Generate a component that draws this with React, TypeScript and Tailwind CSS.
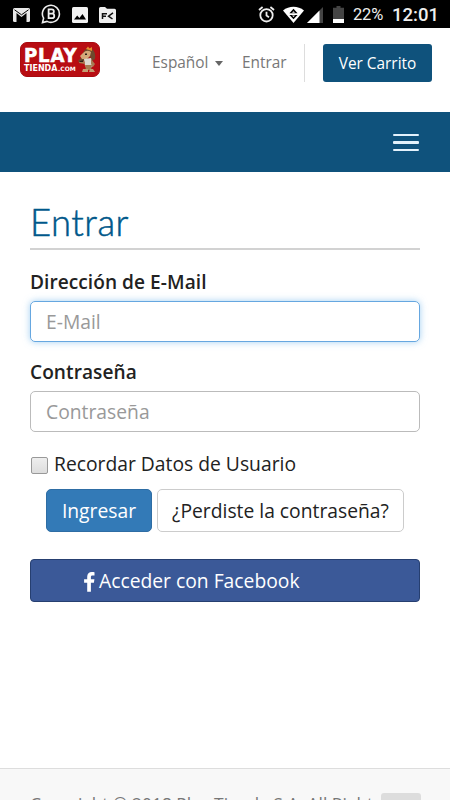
/**
 * Login page (mobile)
 * Android status bar, store header, login form and footer
 */

function StatusBar() {
  return (
    <div className="h-7 shrink-0 bg-black flex items-center justify-between pl-[13px] pr-[11px] pt-px">
      <div className="flex items-center gap-[11px]">
        {/* Mail */}
        <svg className="w-[17px] h-[14px]" viewBox="0 0 17 14">
          <rect width="17" height="14" rx="1.5" fill="#e8e8e8" />
          <path d="M3.5 14V5L8.5 9L13.5 5V14Z" fill="#000" />
          <path d="M1.5 1.8L8.5 6.8L15.5 1.8" fill="none" stroke="#000" strokeWidth="1" />
        </svg>
        {/* Business chat */}
        <svg className="w-5 h-5 -mt-px" viewBox="0 0 20 20">
          <path d="M1.5 18.6L2.6 14.2A8.5 8.5 0 1 1 6 17.4Z" fill="none" stroke="#eee" strokeWidth="1.6" />
          <path d="M7.6 5.4H10.7A2 2 0 0 1 10.7 9.7H7.6ZM7.6 9.7H11A2.2 2.2 0 0 1 11 14.2H7.6Z" fill="none" stroke="#eee" strokeWidth="1.8" />
        </svg>
        {/* Gallery */}
        <svg className="w-4 h-4" viewBox="0 0 16 16">
          <rect width="16" height="16" rx="1.5" fill="#f2f2f2" />
          <path d="M2 12.5L5.2 8.5L7.4 11L10.5 7L14 12.5Z" fill="#000" />
        </svg>
        {/* File explorer */}
        <svg className="w-[17px] h-4" viewBox="0 0 17 16">
          <path d="M1.5 0H6L8 1.8H15.5A1.5 1.5 0 0 1 17 3.3V14.5A1.5 1.5 0 0 1 15.5 16H1.5A1.5 1.5 0 0 1 0 14.5V1.5A1.5 1.5 0 0 1 1.5 0Z" fill="#eee" />
          <path d="M3.5 12V6.7H8M3.5 9.3H7M14 5.8L9.5 9.2L13.5 12" fill="none" stroke="#111" strokeWidth="1.5" />
        </svg>
      </div>

      <div className="flex items-center text-[#eee] font-['Roboto',sans-serif]">
        {/* Alarm */}
        <svg className="w-[17px] h-[17px]" viewBox="0 0 17 17" fill="none" stroke="#eee" strokeWidth="1.8">
          <circle cx="8.5" cy="9.3" r="6.2" />
          <path d="M8.5 5.8V9.6L11 11.2M1 4L4.6 1M16 4L12.4 1" />
        </svg>
        {/* Wifi */}
        <svg className="w-[21px] h-[17px] ml-[8px]" viewBox="0 0 21 17">
          <path d="M0 4.5C6 -0.5 15 -0.5 21 4.5L10.5 17Z" fill="#fff" />
          <path d="M10.5 2.8L14.6 7.3H6.4ZM6.4 9H14.6L10.5 13.3Z" fill="#000" />
          <path d="M10.5 5.2L12 6.7H9ZM9 9.5H12L10.5 11Z" fill="#fff" />
        </svg>
        {/* Signal */}
        <svg className="w-4 h-4 ml-[3px]" viewBox="0 0 16 16">
          <path d="M16 0V16H0Z" fill="#444" />
          <path d="M12.5 3.5V16H0Z" fill="#fff" />
        </svg>
        {/* Battery */}
        <svg className="w-[11px] h-[17px] ml-[10px]" viewBox="0 0 11 17">
          <path d="M3.5 0H7.5V1.7H11V17H0V1.7H3.5Z" fill="#444" />
          <rect y="13" width="11" height="4" fill="#fff" />
        </svg>
        <span className="ml-[9px] w-[31px] text-[16.5px] tracking-[-0.2px] leading-7 whitespace-nowrap">22%</span>
        <span className="ml-[8px] w-[47px] text-[18.5px] font-medium leading-7 whitespace-nowrap">12:01</span>
      </div>
    </div>
  );
}

function Logo() {
  return (
    <div className="relative w-20 h-[35px] rounded-[7px] border border-[#a80a10] bg-[#b80d12] text-white font-['DejaVu_Sans',sans-serif] font-bold">
      <span className="absolute left-[3px] top-[4px] h-[17px] leading-[17px] text-[19px] origin-left scale-x-[0.95] tracking-[0.9px] [-webkit-text-stroke:0.6px_#fff]">PLAY</span>
      <span className="absolute left-[3px] top-[21px] h-[9px] leading-[9px] text-[8px]">TIENDA</span>
      <span className="absolute left-[37px] top-[22px] h-[8px] leading-[8px] text-[6px]">.COM</span>
      {/* Dog mascot */}
      <svg className="absolute left-[56px] top-[3px] w-[20px] h-[27px]" viewBox="56 4 20 27">
        <path d="M63 9Q66 5 71 7Q75 10 74 17L71 19L69 14L66 18L59 21L57 19L61 15Z" fill="#6d4a2d" />
        <path d="M62 11Q66 7 70 10L69 14L66 17L61 17L59 14Z" fill="#d3a878" />
        <path d="M65 7L67 4.5L68.5 6.5L71 5L71 9Z" fill="#e58c2e" />
        <path d="M63 17L70 16L72 24L68 27L64 24Z" fill="#dcd8d0" />
        <path d="M59 18L64 20L64 22L58 21ZM70 17L74 22L72 25L70 22ZM64 23H71L70 28H65Z" fill="#a77c52" />
        <path d="M62 27H67V30H61ZM69 27H72L74 30H68Z" fill="#c39d72" />
        <path d="M58.5 18.5H62V20H58.5ZM64 11.5H66V13H64Z" fill="#2c2019" />
      </svg>
    </div>
  );
}

function Header() {
  return (
    <header className="h-[84px] shrink-0 flex items-start pl-[20px] pr-[18px] pt-[14px] text-[15.4px] text-[#777]">
      <Logo />
      <div className="ml-[52px] h-[41px] flex items-center">
        <span className="w-[59px] whitespace-nowrap">Español</span>
        <span className="ml-[4px] mt-[2px] border-x-[4.5px] border-x-transparent border-t-[5px] border-t-[#666]"></span>
      </div>
      <span className="ml-[19px] w-[45px] leading-[41px] whitespace-nowrap">Entrar</span>
      <div className="ml-[17px] mt-[2px] w-px h-[38px] bg-[#ddd]"></div>
      <button className="ml-auto mt-[2px] w-[109px] h-[38px] rounded-[3px] bg-[#0f527c] text-white leading-[39px] whitespace-nowrap">
        Ver Carrito
      </button>
    </header>
  );
}

function LoginForm() {
  return (
    <main className="grow px-[30px] pt-[27px] text-[19.3px] text-[#222]">
      <h1 className="h-[51px] border-b-2 border-[#d2d2d2] font-['Lato',sans-serif] font-light text-[36.5px] leading-[47px] text-[#00588a] [-webkit-text-stroke:0.5px_#00588a]">
        <span className="tracking-[0.5px]">Entrar</span>
      </h1>

      <label className="block mt-[18px] h-[33px] leading-[29px] font-semibold text-[19.1px] tracking-[0.05px]">Dirección de E-Mail</label>
      <input
        type="email"
        placeholder="E-Mail"
        className="block w-full h-[41px] px-[15px] rounded-[5px] border border-[#66a7e0] outline-none shadow-[0_0_7px_rgba(102,175,233,0.6)] placeholder:text-[#999]"
      />

      <label className="block mt-[16px] h-[33px] leading-[29px] font-semibold text-[19.1px] tracking-[0.05px]">Contraseña</label>
      <input
        type="password"
        placeholder="Contraseña"
        className="block w-full h-[41px] px-[15px] rounded-[5px] border border-[#bbb] outline-none placeholder:text-[#999]"
      />

      <label className="flex items-center mt-[18px] h-[28px]">
        <span className="ml-px mt-[3px] w-[17px] h-[17px] rounded-[2px] border border-[#999] bg-linear-to-b from-[#eee] to-[#ddd]"></span>
        <span className="ml-[6px] whitespace-nowrap">Recordar Datos de Usuario</span>
      </label>

      <div className="flex gap-[5px] mt-[11px] ml-[16px]">
        <button className="w-[106px] h-[43px] pt-[2px] rounded-[5px] border border-[#2e6da4] bg-[#337ab7] text-white">Ingresar</button>
        <button className="w-[247px] h-[43px] pt-[2px] rounded-[5px] border border-[#ccc] bg-white whitespace-nowrap">¿Perdiste la contraseña?</button>
      </div>

      <button className="flex items-center w-full mt-[27px] h-[43px] pl-[52px] pt-[2px] rounded-[4px] border border-[#263f70] bg-[#3b5998] text-white">
        <svg className="w-[12px] h-[20px]" viewBox="0 0 12 20" fill="#fff">
          <path d="M11.5 0.2V3.4H9.6C8.2 3.4 7.9 4.1 7.9 5.1V7.3H11.4L10.9 10.8H7.9V19.8H4.2V10.8H1.1V7.3H4.2V4.7C4.2 1.7 6.1 0 8.8 0C10.1 0 11.2 0.1 11.5 0.2Z" />
        </svg>
        <span className="ml-[4px] whitespace-nowrap">Acceder con Facebook</span>
      </button>
    </main>
  );
}

export default function App() {
  return (
    <div className="w-[450px] h-[800px] flex flex-col overflow-hidden bg-white font-['Open_Sans',sans-serif]">
      <StatusBar />
      <Header />
      <nav className="h-[60px] shrink-0 bg-[#0f527c] flex justify-end items-center pr-[31px]">
        <div className="flex flex-col gap-[5px] pt-px">
          <span className="w-[26px] h-[2.5px] rounded-[1px] bg-[#e3f2fc]"></span>
          <span className="w-[26px] h-[2.5px] rounded-[1px] bg-[#e3f2fc]"></span>
          <span className="w-[26px] h-[2.5px] rounded-[1px] bg-[#e3f2fc]"></span>
        </div>
      </nav>
      <LoginForm />
      <footer className="h-[32px] shrink-0 overflow-hidden flex items-start justify-between border-t border-[#ddd] bg-[#f8f8f8] pl-[30px] pr-[29px] pt-[24px] text-[17.4px] text-[#777]">
        <span className="whitespace-nowrap leading-[22px]">Copyright © 2018 Play Tienda S.A. All Right</span>
        <span className="shrink-0 w-[40px] h-[36px] rounded-[3px] bg-[#ddd]"></span>
      </footer>
    </div>
  );
}
